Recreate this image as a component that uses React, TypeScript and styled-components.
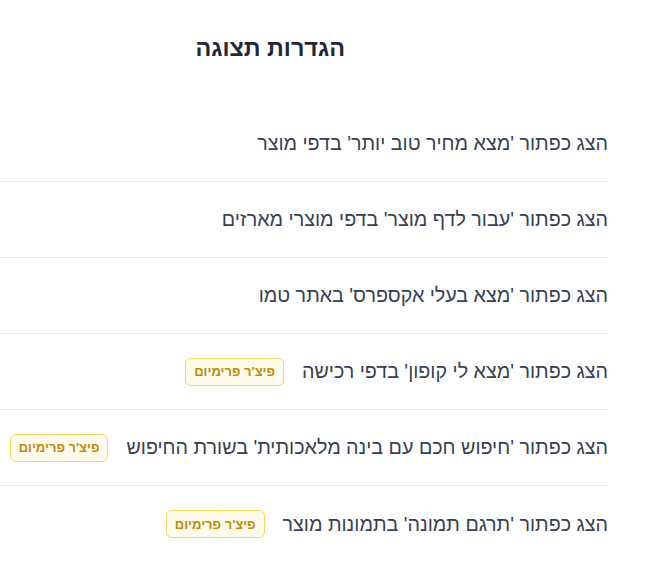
import React from 'react';
import styled, { createGlobalStyle } from 'styled-components';

const GlobalStyle = createGlobalStyle`
  html, body {
    margin: 0;
    padding: 0;
    background: #ffffff;
  }
  body {
    font-family: "Liberation Sans", "DejaVu Sans", sans-serif;
  }
`;

const Panel = styled.div`
  direction: rtl;
  width: 645px;
  min-height: 583px;
  padding-right: 37px;
  box-sizing: border-box;
  background: #ffffff;
  overflow: hidden;
`;

const Header = styled.div`
  height: 106px;
  padding: 34px 263px 0 0;
  box-sizing: border-box;
`;

const Title = styled.h2`
  margin: 0;
  font-size: 23.4px;
  line-height: 28px;
  font-weight: 700;
  color: #1f2937;
  white-space: nowrap;
`;

const List = styled.div`
  display: flex;
  flex-direction: column;
`;

const Row = styled.div`
  height: 76px;
  box-sizing: border-box;
  display: flex;
  align-items: center;
  gap: 18px;
  border-bottom: 1px solid #e5e7eb;

  &:last-child {
    border-bottom: none;
  }
`;

const Label = styled.span`
  font-size: 19.7px;
  color: #374151;
  white-space: nowrap;
`;

const PremiumBadge = styled.span`
  display: inline-flex;
  align-items: center;
  justify-content: center;
  height: 28px;
  padding: 0 8px;
  box-sizing: border-box;
  border: 1px solid #f6d860;
  border-radius: 6px;
  background: #fffbeb;
  color: #bf8a08;
  font-size: 13px;
  font-weight: 700;
  white-space: nowrap;
`;

const settings = [
  { label: "הצג כפתור 'מצא מחיר טוב יותר' בדפי מוצר", premium: false },
  { label: "הצג כפתור 'עבור לדף מוצר' בדפי מוצרי מארזים", premium: false },
  { label: "הצג כפתור 'מצא בעלי אקספרס' באתר טמו", premium: false },
  { label: "הצג כפתור 'מצא לי קופון' בדפי רכישה", premium: true },
  { label: "הצג כפתור 'חיפוש חכם עם בינה מלאכותית' בשורת החיפוש", premium: true },
  { label: "הצג כפתור 'תרגם תמונה' בתמונות מוצר", premium: true },
];

export default function App() {
  return (
    <>
      <GlobalStyle />
      <Panel>
        <Header>
          <Title>הגדרות תצוגה</Title>
        </Header>
        <List>
          {settings.map((s, i) => (
            <Row key={i}>
              <Label>{s.label}</Label>
              {s.premium && <PremiumBadge>פיצ'ר פרימיום</PremiumBadge>}
            </Row>
          ))}
        </List>
      </Panel>
    </>
  );
}
